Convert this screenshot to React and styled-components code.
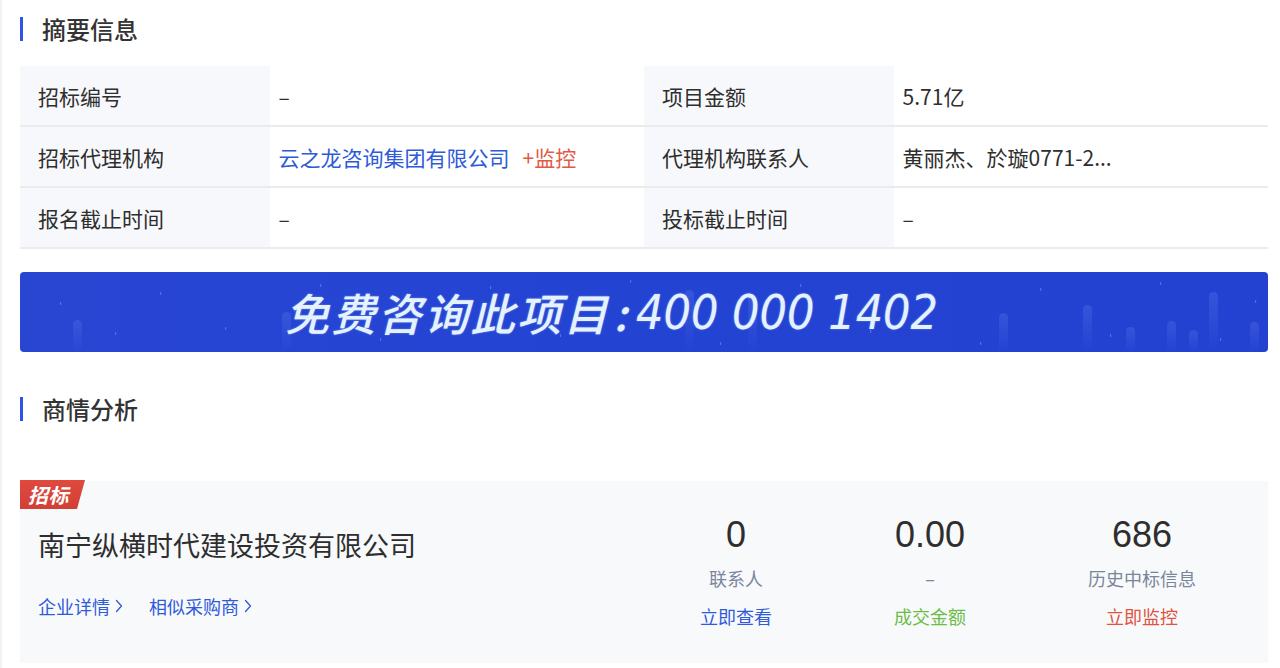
import React from "react";
import styled, { createGlobalStyle } from "styled-components";

const Global = createGlobalStyle`
  html, body { margin: 0; padding: 0; background: #ffffff; }
  body { font-family: "Noto Sans CJK SC", "Noto Sans", sans-serif; color: #333333; }
  * { box-sizing: border-box; }
`;

const Page = styled.div`
  border-left: 2px solid #f1f2f5;
  padding: 17px 12px 5px 18px;
  min-height: 668px;
`;

const SectionTitle = styled.h2`
  margin: ${(p) => p.$top || 0}px 0 0 0;
  display: flex;
  align-items: center;
  height: 24px;
  font-size: 24px;
  line-height: 24px;
  font-weight: 500;
  color: #333333;
  &::before {
    content: "";
    display: block;
    width: 3px;
    height: 24px;
    background: #2f55e4;
    margin-right: 19px;
  }
`;

const Table = styled.div`
  margin-top: 25px;
  display: flex;
  flex-direction: column;
`;

const Row = styled.div`
  display: grid;
  grid-template-columns: 20% 30% 20% 30%;
  border-bottom: 2px solid #ebebeb;
`;

const Label = styled.div`
  height: 59px;
  display: flex;
  align-items: center;
  padding-left: 18px;
  background: #f7f8fb;
  font-size: 21px;
  color: #2e2e2e;
`;

const Value = styled.div`
  height: 59px;
  display: flex;
  align-items: center;
  padding-left: 9px;
  font-size: 21px;
  color: #2e2e2e;
  white-space: nowrap;
`;

const LinkText = styled.span`
  color: ${(p) => p.$color || "#2f5bd8"};
  margin-left: ${(p) => p.$gap || 0}px;
  cursor: pointer;
`;

const Banner = styled.div`
  position: relative;
  margin-top: 23px;
  height: 80px;
  border-radius: 4px;
  overflow: hidden;
  background: linear-gradient(90deg, #2846d2 0%, #2343d3 50%, #2442d2 100%);
  display: flex;
  align-items: center;
  padding-left: 265px;
`;

const BannerDeco = styled.svg`
  position: absolute;
  left: 0;
  top: 0;
  width: 100%;
  height: 100%;
`;

const BannerText = styled.div`
  position: relative;
  display: flex;
  align-items: center;
  color: #e4f2ff;
  text-shadow: 0 0 2px rgba(200, 230, 255, 0.5);
`;

const BannerCn = styled.span`
  font-family: "Noto Sans CJK SC", sans-serif;
  font-size: 44px;
  font-weight: 500;
  font-style: italic;
  letter-spacing: 2.4px;
  line-height: 1;
`;

const BannerColon = styled.span`
  font-family: "Noto Sans CJK SC", sans-serif;
  font-size: 44px;
  font-weight: 500;
  font-style: italic;
  line-height: 1;
  margin: 0 9px 0 4px;
`;

const BannerNum = styled.span`
  font-family: "DejaVu Sans Condensed", "Liberation Sans Narrow", "DejaVu Sans", sans-serif;
  font-stretch: condensed;
  font-size: 48px;
  font-style: italic;
  font-weight: 500;
  line-height: 1;
  white-space: pre;
`;

const Card = styled.div`
  position: relative;
  margin-top: 60px;
  background: #f8f9fb;
  display: flex;
  align-items: flex-start;
  padding: 32px 72px 35px 18px;
`;

const Badge = styled.div`
  position: absolute;
  left: 0;
  top: -1px;
  width: 65px;
  height: 29px;
  background: linear-gradient(180deg, #de4a3e 0%, #d23f35 100%);
  clip-path: polygon(0 0, 65px 0, 57px 100%, 0 100%);
  color: #ffffff;
  font-size: 20px;
  font-weight: 700;
  font-style: italic;
  line-height: 29px;
  padding-left: 8px;
  letter-spacing: 0.5px;
`;

const CompanyCol = styled.div`
  flex: 1;
  margin-top: 14px;
  display: flex;
  flex-direction: column;
`;

const CompanyName = styled.div`
  font-size: 27px;
  line-height: 36px;
  color: #2e2e2e;
`;

const CompanyLinks = styled.div`
  margin-top: 31px;
  display: flex;
  gap: 26px;
`;

const CompanyLink = styled.a`
  display: flex;
  align-items: center;
  gap: 5px;
  font-size: 18px;
  line-height: 24px;
  color: #2f5bd8;
  text-decoration: none;
  cursor: pointer;
`;

const Stats = styled.div`
  display: flex;
  gap: 122px;
`;

const Stat = styled.div`
  display: flex;
  flex-direction: column;
  align-items: center;
`;

const StatNum = styled.div`
  font-family: "Liberation Sans", Arial, sans-serif;
  font-size: 36px;
  line-height: 44px;
  color: #2e2e2e;
`;

const StatLabel = styled.div`
  margin-top: 9px;
  font-size: 18px;
  line-height: 24px;
  color: #7a869c;
`;

const StatLink = styled.div`
  margin-top: 14px;
  font-size: 18px;
  line-height: 24px;
  color: ${(p) => p.$color};
  cursor: pointer;
`;

const Chevron = () => (
  <svg width="8" height="14" viewBox="0 0 8 14" fill="none">
    <path d="M1.5 1.5 L6.5 7 L1.5 12.5" stroke="#2f5bd8" strokeWidth="1.3" strokeLinecap="round" strokeLinejoin="round" />
  </svg>
);

const bars = [
  [53, 48], [262, 40], [665, 18], [728, 23], [979, 41], [1063, 33],
  [1106, 55], [1147, 49], [1169, 58], [1189, 20], [1230, 50],
];
const dots = [
  [40, 30], [95, 60], [140, 20], [205, 55], [300, 12], [360, 66], [420, 35],
  [470, 14], [540, 62], [610, 8], [700, 70], [780, 12], [850, 58], [905, 24],
  [960, 70], [1020, 16], [1090, 62], [1140, 10], [1200, 66], [1235, 28],
];

const summary = [
  [
    { label: "招标编号", value: "–" },
    { label: "项目金额", value: "5.71亿" },
  ],
  [
    {
      label: "招标代理机构",
      value: (
        <>
          <LinkText>云之龙咨询集团有限公司</LinkText>
          <LinkText $color="#e25a45" $gap={13}>+监控</LinkText>
        </>
      ),
    },
    { label: "代理机构联系人", value: "黄丽杰、於璇0771-2..." },
  ],
  [
    { label: "报名截止时间", value: "–" },
    { label: "投标截止时间", value: "–" },
  ],
];

const stats = [
  { num: "0", label: "联系人", link: "立即查看", color: "#2f5bd8" },
  { num: "0.00", label: "–", link: "成交金额", color: "#6cbd45" },
  { num: "686", label: "历史中标信息", link: "立即监控", color: "#e0533f" },
];

export default function App() {
  return (
    <>
      <Global />
      <Page>
        <SectionTitle>摘要信息</SectionTitle>
        <Table>
          {summary.map((row, i) => (
            <Row key={i}>
              {row.map((c, j) => (
                <React.Fragment key={j}>
                  <Label>{c.label}</Label>
                  <Value>{c.value}</Value>
                </React.Fragment>
              ))}
            </Row>
          ))}
        </Table>

        <Banner>
          <BannerDeco viewBox="0 0 1248 80" preserveAspectRatio="none">
            <defs>
              <linearGradient id="barFade" x1="0" y1="0" x2="0" y2="1">
                <stop offset="0" stopColor="rgb(150,180,255)" stopOpacity="0.16" />
                <stop offset="1" stopColor="rgb(150,180,255)" stopOpacity="0" />
              </linearGradient>
            </defs>
            {bars.map(([x, y], i) => (
              <rect key={i} x={x} y={y} width="9" height={80 - y} rx="4.5" fill="url(#barFade)" />
            ))}
            {dots.map(([x, y], i) => (
              <rect key={"d" + i} x={x} y={y} width="1.2" height="3" fill="rgba(190,210,255,0.3)" />
            ))}
          </BannerDeco>
          <BannerText>
            <BannerCn>免费咨询此项目</BannerCn>
            <BannerColon>:</BannerColon>
            <BannerNum>400 000 1402</BannerNum>
          </BannerText>
        </Banner>

        <SectionTitle $top={45}>商情分析</SectionTitle>

        <Card>
          <Badge>招标</Badge>
          <CompanyCol>
            <CompanyName>南宁纵横时代建设投资有限公司</CompanyName>
            <CompanyLinks>
              <CompanyLink>企业详情<Chevron /></CompanyLink>
              <CompanyLink>相似采购商<Chevron /></CompanyLink>
            </CompanyLinks>
          </CompanyCol>
          <Stats>
            {stats.map((s, i) => (
              <Stat key={i}>
                <StatNum>{s.num}</StatNum>
                <StatLabel>{s.label}</StatLabel>
                <StatLink $color={s.color}>{s.link}</StatLink>
              </Stat>
            ))}
          </Stats>
        </Card>
      </Page>
    </>
  );
}
